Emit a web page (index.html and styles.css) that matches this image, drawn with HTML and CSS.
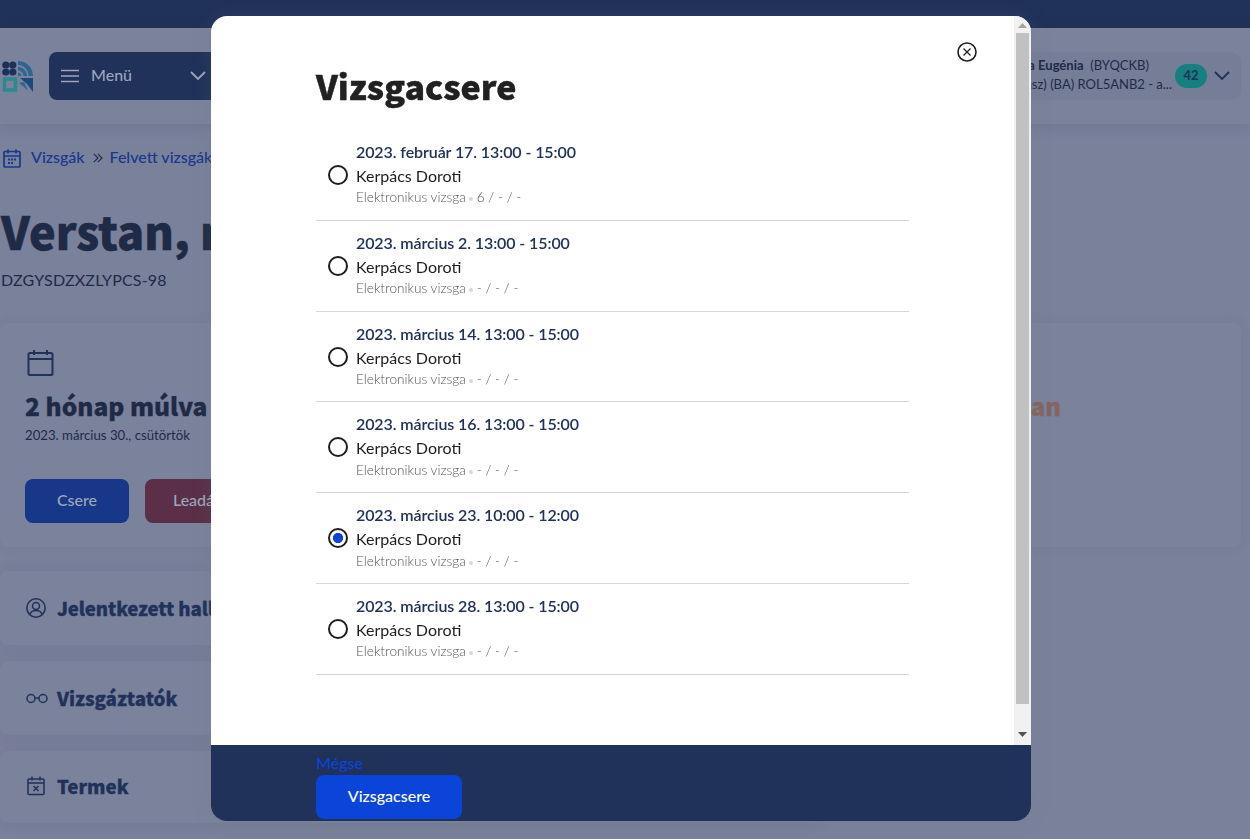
FILE: index.html
```html
<!DOCTYPE html>
<html lang="hu">
<head>
<meta charset="utf-8">
<title>Vizsgacsere</title>
<link rel="stylesheet" href="styles.css">
</head>
<body>
<div class="page">
  <div class="topbar"></div>
  <header class="header">
    <svg class="logo" viewBox="0 0 32 32" width="32" height="32">
      <g fill="#1d3158"><circle cx="4.800" cy="5" r="3.600"/><circle cx="11.800" cy="5" r="3.600"/><circle cx="4.800" cy="12" r="3.600"/><circle cx="11.800" cy="12" r="3.600"/></g>
      <path d="M17 1c8 0 15 6 15 15h-4.500c0-6-4.500-11-10.500-11z" fill="#2e6593"/>
      <path d="M17 7c5 0 9 4 9 9h-3.500c0-3-2.500-5.500-5.500-5.500z" fill="#2e6593"/>
      <path d="M17 12.500c2 0 3.500 1.500 3.500 3.500H17z" fill="#2e6593"/>
      <rect x="3.500" y="19" width="11" height="11" fill="none" stroke="#2b8a8d" stroke-width="3.500"/>
      <path d="M19 18h13v14l-6-8z" fill="#1d4a78"/>
      <path d="M18 23l5-1 4 9-4-4z" fill="#2e6593"/>
    </svg>
    <div class="menu">
      <svg class="burger" viewBox="0 0 18 14" width="18" height="14"><path d="M0 1.500h18M0 7h18M0 12.500h18" stroke="#9da5bd" stroke-width="1.600"/></svg>
      <span class="menu-label">Menü</span>
      <svg class="menu-chev" viewBox="0 0 16 10" width="16" height="10"><path d="M1 1l7 7 7-7" fill="none" stroke="#9da5bd" stroke-width="1.800"/></svg>
    </div>
    <div class="user">
      <div class="user-text">
        <div class="user-name"><b>Kovács Anna Eugénia</b>&nbsp; (BYQCKB)</div>
        <div class="user-role">Hallgató (szakasz) (BA) ROL5ANB2 - a...</div>
      </div>
      <span class="badge">42</span>
      <svg class="user-chev" viewBox="0 0 16 10" width="16" height="10"><path d="M1 1l7 7 7-7" fill="none" stroke="#20315a" stroke-width="1.800"/></svg>
    </div>
  </header>
  <main class="content">
    <nav class="crumbs">
      <svg viewBox="0 0 18 19" width="18" height="19" fill="none" stroke="#17388c" stroke-width="1.700"><rect x="1" y="2.500" width="16" height="15.500" rx="1"/><path d="M1 7h16M5 .5v4M13 .5v4"/><path d="M5 10.500h2M8 10.500h2M11 10.500h2M5 14h2M8 14h2" stroke-width="1.800"/></svg>
      <a class="crumb">Vizsgák</a>
      <svg class="crumb-sep" viewBox="0 0 10 10" width="10" height="10" fill="none" stroke="#1f2a47" stroke-width="1.100"><path d="M.8 .8L5 5 .8 9.200M4.800 .8L9 5 4.800 9.200"/></svg>
      <a class="crumb">Felvett vizsgák</a>
    </nav>
    <h1 class="title">Verstan, műfajelmélet</h1>
    <div class="code">DZGYSDZXZLYPCS-98</div>
    <section class="card card-main">
      <div class="main-left">
        <svg class="cal-big" viewBox="0 0 27 26" width="27" height="26" fill="none" stroke="#20315a" stroke-width="2"><rect x="1.500" y="3" width="24" height="22" rx="1.500"/><path d="M1.500 9h24M7 0v5M20 0v5"/></svg>
        <div class="when">2 hónap múlva</div>
        <div class="when-date">2023. március 30., csütörtök</div>
        <div class="actions">
          <button class="btn btn-swap">Csere</button>
          <button class="btn btn-drop">Leadás</button>
        </div>
      </div>
      <div class="state">Folyamatban</div>
    </section>
    <section class="card row row-a">
      <svg viewBox="0 0 20 20" width="20" height="20" fill="none" stroke="#20315a" stroke-width="1.500"><circle cx="10" cy="10" r="9.200"/><circle cx="10" cy="8" r="3.500"/><path d="M3.800 16.500c1-3 3.500-4 6.200-4s5.200 1 6.200 4"/></svg>
      <span class="row-text">Jelentkezett hallgatók</span>
    </section>
    <section class="card row row-b">
      <svg viewBox="0 0 22 12" width="22" height="12" fill="none" stroke="#20315a" stroke-width="1.500"><circle cx="5" cy="6.500" r="4"/><circle cx="17" cy="6.500" r="4"/><path d="M9 6h4"/></svg>
      <span class="row-text">Vizsgáztatók</span>
    </section>
    <section class="card row row-c">
      <svg viewBox="0 0 20 20" width="20" height="20" fill="none" stroke="#20315a" stroke-width="1.500"><rect x="2" y="3" width="16" height="15.500" rx="1"/><path d="M2 7h16M6 .5v4M14 .5v4M7.500 10l5 5M12.500 10l-5 5"/></svg>
      <span class="row-text">Termek</span>
    </section>
  </main>
</div>

<div class="modal">
  <div class="modal-main">
    <div class="modal-body">
      <h2 class="modal-title">Vizsgacsere</h2>
      <ul class="options">
        <li class="option"><span class="radio"></span><div><div class="opt-date">2023. február 17. 13:00 - 15:00</div><div class="opt-name">Kerpács Doroti</div><div class="opt-meta">Elektronikus vizsga<i class="dot"></i>6 / - / -</div></div></li>
        <li class="option"><span class="radio"></span><div><div class="opt-date">2023. március 2. 13:00 - 15:00</div><div class="opt-name">Kerpács Doroti</div><div class="opt-meta">Elektronikus vizsga<i class="dot"></i>- / - / -</div></div></li>
        <li class="option"><span class="radio"></span><div><div class="opt-date">2023. március 14. 13:00 - 15:00</div><div class="opt-name">Kerpács Doroti</div><div class="opt-meta">Elektronikus vizsga<i class="dot"></i>- / - / -</div></div></li>
        <li class="option"><span class="radio"></span><div><div class="opt-date">2023. március 16. 13:00 - 15:00</div><div class="opt-name">Kerpács Doroti</div><div class="opt-meta">Elektronikus vizsga<i class="dot"></i>- / - / -</div></div></li>
        <li class="option"><span class="radio radio-on"></span><div><div class="opt-date">2023. március 23. 10:00 - 12:00</div><div class="opt-name">Kerpács Doroti</div><div class="opt-meta">Elektronikus vizsga<i class="dot"></i>- / - / -</div></div></li>
        <li class="option"><span class="radio"></span><div><div class="opt-date">2023. március 28. 13:00 - 15:00</div><div class="opt-name">Kerpács Doroti</div><div class="opt-meta">Elektronikus vizsga<i class="dot"></i>- / - / -</div></div></li>
      </ul>
      <svg class="close" viewBox="0 0 20 20" width="20" height="20" fill="none" stroke="#1d1d1d"><circle cx="10" cy="10" r="9" stroke-width="1.600"/><path d="M6.500 6.500l7 7M13.500 6.500l-7 7" stroke-width="1.200"/></svg>
    </div>
    <div class="scrollbar">
      <svg class="arrow" viewBox="0 0 9 5" width="9" height="5"><path d="M4.500 0L9 5H0z" fill="#a3a3a3"/></svg>
      <div class="thumb"></div>
      <svg class="arrow" viewBox="0 0 9 5" width="9" height="5"><path d="M4.500 5L9 0H0z" fill="#505050"/></svg>
    </div>
  </div>
  <footer class="modal-foot">
    <a class="cancel">Mégse</a>
    <button class="submit">Vizsgacsere</button>
  </footer>
</div>
</body>
</html>
```

FILE: styles.css
```css
* { box-sizing: border-box; }
html, body { margin: 0; height: 100%; overflow: hidden; }
body { background: #7a819b; font-family: "Lato", sans-serif; color: #1f2a47; }
.topbar { height: 28px; background: #20315a; }

.header { position: relative; height: 96px; background: #7b829c; display: flex; align-items: center; padding: 0 9px 0 1px; box-shadow: 0 2px 14px rgba(50, 60, 90, .14); }
.logo { flex: none; }
.menu { width: 220px; height: 48px; margin-left: 16px; padding: 0 16px 4px 12px; background: #20315a; border-radius: 8px; display: flex; align-items: center; color: #9da5bd; }
.burger { margin-top: 4px; }
.menu-label { margin-left: 12px; font-size: 16px; font-weight: 500; flex: 1; }
.menu-chev { margin: 4px 47px 0 0; }
.user { margin-left: auto; height: 48px; padding: 0 11px 0 16px; background: #767d97; border-radius: 10px; display: flex; align-items: center; }
.user-text { font-size: 13px; line-height: 19px; padding-bottom: 3px; color: #1f2a47; text-align: right; }
.user-name { margin-right: 23px; }
.user-name b { font-weight: 700; }
.badge { margin-left: 3px; width: 32px; height: 24px; border-radius: 12px; background: #15807f; color: #20315a; font-size: 13px; font-weight: 700; text-align: center; line-height: 23px; }
.user-chev { margin-left: 7px; }

.content { display: flex; flex-direction: column; padding-right: 9px; }
.crumbs { height: 24px; margin: 22px 0 0 3px; display: flex; align-items: center; font-size: 16px; line-height: 22px; color: #17388c; }
.crumb { margin-left: 10px; font-weight: 500; padding-bottom: 2px; }
.crumb-sep { margin-left: 8px; margin-right: -3px; }
.title { margin: 31px 0 0 1px; font-family: "Noto Sans CJK SC", "Noto Sans", sans-serif; font-weight: 900; font-size: 45px; line-height: 60px; -webkit-text-stroke: .5px #1f2a47; color: #1f2a47; }
.code { margin: 7px 0 0 1px; font-size: 16px; line-height: 24px; letter-spacing: .18px; }
.card { background: #7b829c; border-radius: 8px; box-shadow: 0 0 16px rgba(50, 60, 90, .12); }
.card-main { margin-top: 31px; height: 224px; padding: 27px 180px 0 25px; display: flex; justify-content: space-between; align-items: flex-start; box-shadow: 0 0 14px rgba(50, 60, 90, .07); }
.cal-big { display: block; margin-left: 2px; }
.when { margin-top: 12px; font-family: "Noto Sans CJK SC", "Noto Sans", sans-serif; font-weight: 900; font-size: 24.5px; line-height: 36px; -webkit-text-stroke: .3px #1f2a47; color: #1f2a47; }
.when-date { margin-top: 2px; font-size: 13.2px; line-height: 18px; }
.actions { display: flex; gap: 16px; margin-top: 35px; }
.btn { height: 44px; width: 104px; border: 0; border-radius: 8px; padding: 0 0 4px; font: 500 16px "Lato", sans-serif; color: #9da5bd; }
.btn-swap { background: #173788; }
.btn-drop { background: #5a2f47; }
.state { margin-top: 39px; font-family: "Noto Sans CJK SC", "Noto Sans", sans-serif; font-weight: 900; font-size: 24px; line-height: 34px; -webkit-text-stroke: .3px #85655f; color: #85655f; }
.row { width: 820px; padding-left: 26px; display: flex; align-items: center; gap: 11px; font-family: "Noto Sans CJK SC", "Noto Sans", sans-serif; font-weight: 900; font-size: 18.7px; -webkit-text-stroke: .3px #20315a; color: #20315a; }
.row-text { padding-bottom: 2px; }
.row-a { margin-top: 24px; height: 74px; letter-spacing: -.15px; }
.row-b { margin-top: 16px; height: 74px; gap: 9px; }
.row-c { margin-top: 16px; height: 72px; padding-bottom: 2px; }

.modal { position: fixed; left: 211px; top: 16px; width: 820px; height: 805px; border-radius: 16px; overflow: hidden; display: flex; flex-direction: column; box-shadow: 0 0 20px rgba(110, 125, 125, .18); }
.modal-main { flex: 1; min-height: 0; background: #fff; display: flex; }
.modal-body { position: relative; flex: 1; padding: 47px 0 0 105px; color: #1d1d1d; }
.modal-title { margin: 0; font-family: "Noto Sans CJK SC", "Noto Sans", sans-serif; font-weight: 900; font-size: 34px; line-height: 46px; -webkit-text-stroke: .4px #212121; color: #212121; }
.options { list-style: none; margin: 21px 0 0; padding: 0; width: 593px; }
.option { height: 90.8px; padding: 10px 0 0 12px; border-bottom: 1px solid #d6d6d6; display: flex; align-items: flex-start; gap: 8px; }
.radio { flex: none; width: 20px; height: 20px; margin-top: 25px; border: 2px solid #1d1d1d; border-radius: 50%; }
.radio-on { background: radial-gradient(circle, #0a44d8 0 4.800px, #fff 5.400px); }
.opt-date { font-size: 16px; line-height: 24px; font-weight: 600; letter-spacing: -.1px; color: #20315a; }
.opt-name { font-size: 16px; line-height: 24px; color: #1d1d1d; }
.opt-meta { font-size: 13.6px; line-height: 18px; font-weight: 300; color: #555; margin-top: .4px; }
.dot { display: inline-block; width: 4px; height: 4px; margin: 0 4px 0 3px; border-radius: 50%; background: #d8d8d8; vertical-align: 1px; }
.close { position: absolute; left: 746px; top: 26px; }
.scrollbar { flex: none; width: 17px; background: #f1f1f1; display: flex; flex-direction: column; align-items: center; padding: 7px 0 8px; }
.thumb { width: 13px; height: 671px; margin: 5px 0 auto; background: #c1c1c1; }
.arrow { flex: none; }

.modal-foot { flex: none; height: 76px; background: #20315a; padding: 6px 0 0 105px; display: flex; flex-direction: column; align-items: flex-start; }
.cancel { font-size: 16px; line-height: 24px; font-weight: 500; color: #0a44d8; }
.submit { width: 146px; height: 44px; border: 0; border-radius: 8px; padding: 0 0 4px; background: #0a44d8; color: #fff; font: 500 16px "Lato", sans-serif; }
```
